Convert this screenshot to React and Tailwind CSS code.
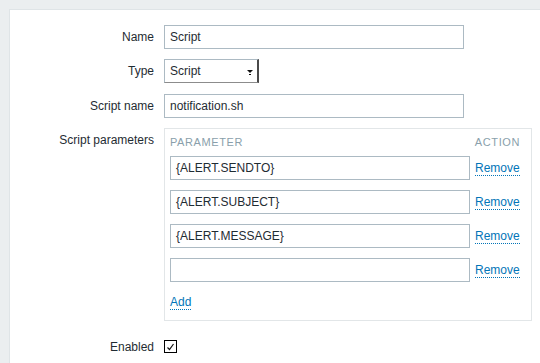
import React from 'react';

const font = { fontFamily: '"Liberation Sans", Arial, sans-serif' };

// one label + field line of the form
const Row = ({ label, children, className = '', labelClass = 'leading-[24px]' }) => (
  <div className={`flex gap-[10px] ${className}`}>
    <div className={`w-[144px] shrink-0 text-right text-[12px] text-[#1f2c33] ${labelClass}`}>{label}</div>
    <div>{children}</div>
  </div>
);

const TextInput = ({ value, width = 'w-[300px]' }) => (
  <div className={`${width} h-[24px] border border-[#acbac3] bg-white px-[5px] text-[12px] leading-[22px] text-[#1f2c33]`}>
    {value}
  </div>
);

const RemoveLink = () => (
  <span className="text-[12px] leading-[14px] text-[#0275b8] border-b border-dotted border-[#0275b8]">Remove</span>
);

export default function App() {
  const params = ['{ALERT.SENDTO}', '{ALERT.SUBJECT}', '{ALERT.MESSAGE}', ''];

  return (
    <div className="min-h-screen bg-[#ebeef0] pt-[9px] pl-[9px]" style={font}>
      <div className="min-h-[354px] bg-white border-l border-t border-[#dfe4e7] pt-[15px]">
        <Row label="Name">
          <TextInput value="Script" />
        </Row>

        <Row label="Type" className="mt-[10px]">
          <div className="relative w-[95px] h-[24px] bg-white border-l border-t border-[#acbac3] border-r-2 border-b border-r-[#4a4a4a] border-b-[#8c8c8c] pl-[5px] text-[12px] leading-[22px] text-[#1f2c33]">
            Script
            <svg className="absolute right-[4px] top-[10px]" width="6" height="5" viewBox="0 0 6 5">
              <path d="M0 0h6L3 3z" fill="#111" />
              <rect x="2" y="4" width="2" height="1" fill="#111" />
            </svg>
          </div>
        </Row>

        <Row label="Script name" className="mt-[11px]">
          <TextInput value="notification.sh" />
        </Row>

        <Row label="Script parameters" className="mt-[10px]" labelClass="pt-[5px] leading-[14px]">
          <div className="w-[368px] border border-[#e2e6e8] px-[5px] pb-[17px]">
            <div className="flex justify-between pt-[7px] pr-[6px] h-[27px] text-[11px] leading-[13px] tracking-[0.6px] text-[#8a9fab]">
              <span>PARAMETER</span>
              <span>ACTION</span>
            </div>
            <div className="flex flex-col gap-[10px]">
              {params.map((p, i) => (
                <div key={i} className="flex items-center gap-[5px]">
                  <TextInput value={p} />
                  <RemoveLink />
                </div>
              ))}
            </div>
            <div className="mt-[7px] h-[14px]">
              <span className="text-[12px] leading-[14px] text-[#0275b8] border-b border-dotted border-[#0275b8]">Add</span>
            </div>
          </div>
        </Row>

        <Row label="Enabled" className="mt-[19px]" labelClass="leading-[14px]">
          <div className="w-[13px] h-[13px] border border-black bg-white flex items-center justify-center">
            <svg width="9" height="8" viewBox="0 0 9 8">
              <path d="M1.5 4.5l2 2L7.5 1" fill="none" stroke="#111" strokeWidth="1.2" />
            </svg>
          </div>
        </Row>
      </div>
    </div>
  );
}
